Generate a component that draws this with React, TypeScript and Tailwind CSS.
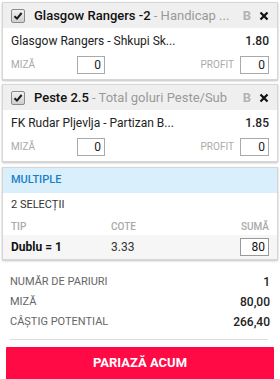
import React from "react";

function Check() {
  return (
    <div className="w-[14px] h-[14px] border border-[#8a8a8a] rounded-[2px] bg-gradient-to-b from-[#f2f2f2] to-[#cfcfcf] flex items-center justify-center shrink-0">
      <svg width="10" height="10" viewBox="0 0 10 10">
        <path d="M1.5 5.2 L4 7.6 L8.6 2" stroke="#1a1a1a" strokeWidth="2" fill="none" />
      </svg>
    </div>
  );
}

function Bet({ title, sub, match, odd }: { title: string; sub: string; match: string; odd: string }) {
  return (
    <div className="mx-[2px] border border-[#d6d6d6] bg-white shadow-[0_1px_2px_rgba(0,0,0,0.25)]">
      <div className="h-[25px] bg-[#efefef] flex items-center pl-[8px] pr-[8px]">
        <Check />
        <div className="ml-[9px] flex-1 min-w-0 whitespace-nowrap overflow-hidden text-[13px]">
          <span className="font-medium text-[#111]">{title}</span>
          <span className="text-[#9a9a9a]">{sub}</span>
        </div>
        <span className="ml-[6px] text-[13px] font-bold text-[#b3b3b3]">B</span>
        <span className="ml-[8px] w-[10px] flex items-center justify-center">
          <svg width="10" height="10" viewBox="0 0 10 10">
            <path d="M1.5 1.5 L8.5 8.5 M8.5 1.5 L1.5 8.5" stroke="#111" strokeWidth="2.2" />
          </svg>
        </span>
      </div>
      <div className="h-[25px] flex items-center px-[8px] text-[12px] text-[#222]">
        <span className="flex-1">{match}</span>
        <span className="font-medium">{odd}</span>
      </div>
      <div className="h-[26px] flex items-center px-[8px] pb-[3px]">
        <span className="w-[66px] text-[10px] text-[#aaa]">MIZĂ</span>
        <div className="w-[28px] h-[18px] border border-[#aaa] text-[12px] text-[#222] text-right pr-[3px] leading-[16px]">0</div>
        <span className="flex-1" />
        <span className="text-[10px] text-[#aaa] mr-[6px]">PROFIT</span>
        <div className="w-[29px] h-[18px] border border-[#aaa] text-[12px] text-[#222] text-right pr-[3px] leading-[16px]">0</div>
      </div>
    </div>
  );
}

export default function App() {
  return (
    <div className="w-[280px] h-[379px] bg-white pt-[2px] overflow-hidden" style={{ fontFamily: "Roboto, 'Liberation Sans', sans-serif" }}>
      <Bet title="Glasgow Rangers -2" sub=" - Handicap ..." match="Glasgow Rangers - Shkupi Sk..." odd="1.80" />
      <div className="h-[4px]" />
      <Bet title="Peste 2.5" sub=" - Total goluri Peste/Sub" match="FK Rudar Pljevlja - Partizan B..." odd="1.85" />
      <div className="h-[5px]" />
      <div className="mx-[2px] border border-[#d6d6d6] bg-white shadow-[0_1px_2px_rgba(0,0,0,0.25)]">
        <div className="h-[25px] bg-[#d9effc] flex items-center px-[8px] text-[11px] font-medium text-[#1c7fc9]">MULTIPLE</div>
        <div className="h-[24px] flex items-center px-[8px] text-[11px] text-[#333]">2 SELECȚII</div>
        <div className="h-[18px] flex items-end pb-[1px] px-[8px] text-[10px] font-medium text-[#aaa]">
          <span className="w-[100px]">TIP</span>
          <span className="flex-1">COTE</span>
          <span>SUMĂ</span>
        </div>
        <div className="h-[24px] bg-[#f6f6f6] flex items-center px-[8px] text-[12px] text-[#111]">
          <span className="w-[100px] font-bold">Dublu = 1</span>
          <span className="flex-1 text-[#333]">3.33</span>
          <div className="w-[29px] h-[18px] border border-[#999] bg-white text-[12px] text-right pr-[3px] leading-[16px]">80</div>
        </div>
      </div>
      <div className="px-[10px] pt-[12px]">
        <div className="h-[20px] flex items-center justify-between text-[11px] text-[#666]">
          <span>NUMĂR DE PARIURI</span>
          <span className="text-[12px] font-medium text-[#222]">1</span>
        </div>
        <div className="h-[20px] flex items-center justify-between text-[11px] text-[#666]">
          <span>MIZĂ</span>
          <span className="text-[12px] font-medium text-[#222]">80,00</span>
        </div>
        <div className="h-[20px] flex items-center justify-between text-[11px] text-[#666]">
          <span>CÂȘTIG POTENTIAL</span>
          <span className="text-[12px] font-medium text-[#222]">266,40</span>
        </div>
        <div className="mt-[7px] mr-[2px] border-t border-[#ddd]" />
      </div>
      <div className="mx-[6px] mt-[7px] h-[32px] bg-[#ff0a45] rounded-[1px] shadow-[0_2px_0_#9b0f2f] flex items-center justify-center text-white text-[13px] font-bold">
        PARIAZĂ ACUM
      </div>
    </div>
  );
}
